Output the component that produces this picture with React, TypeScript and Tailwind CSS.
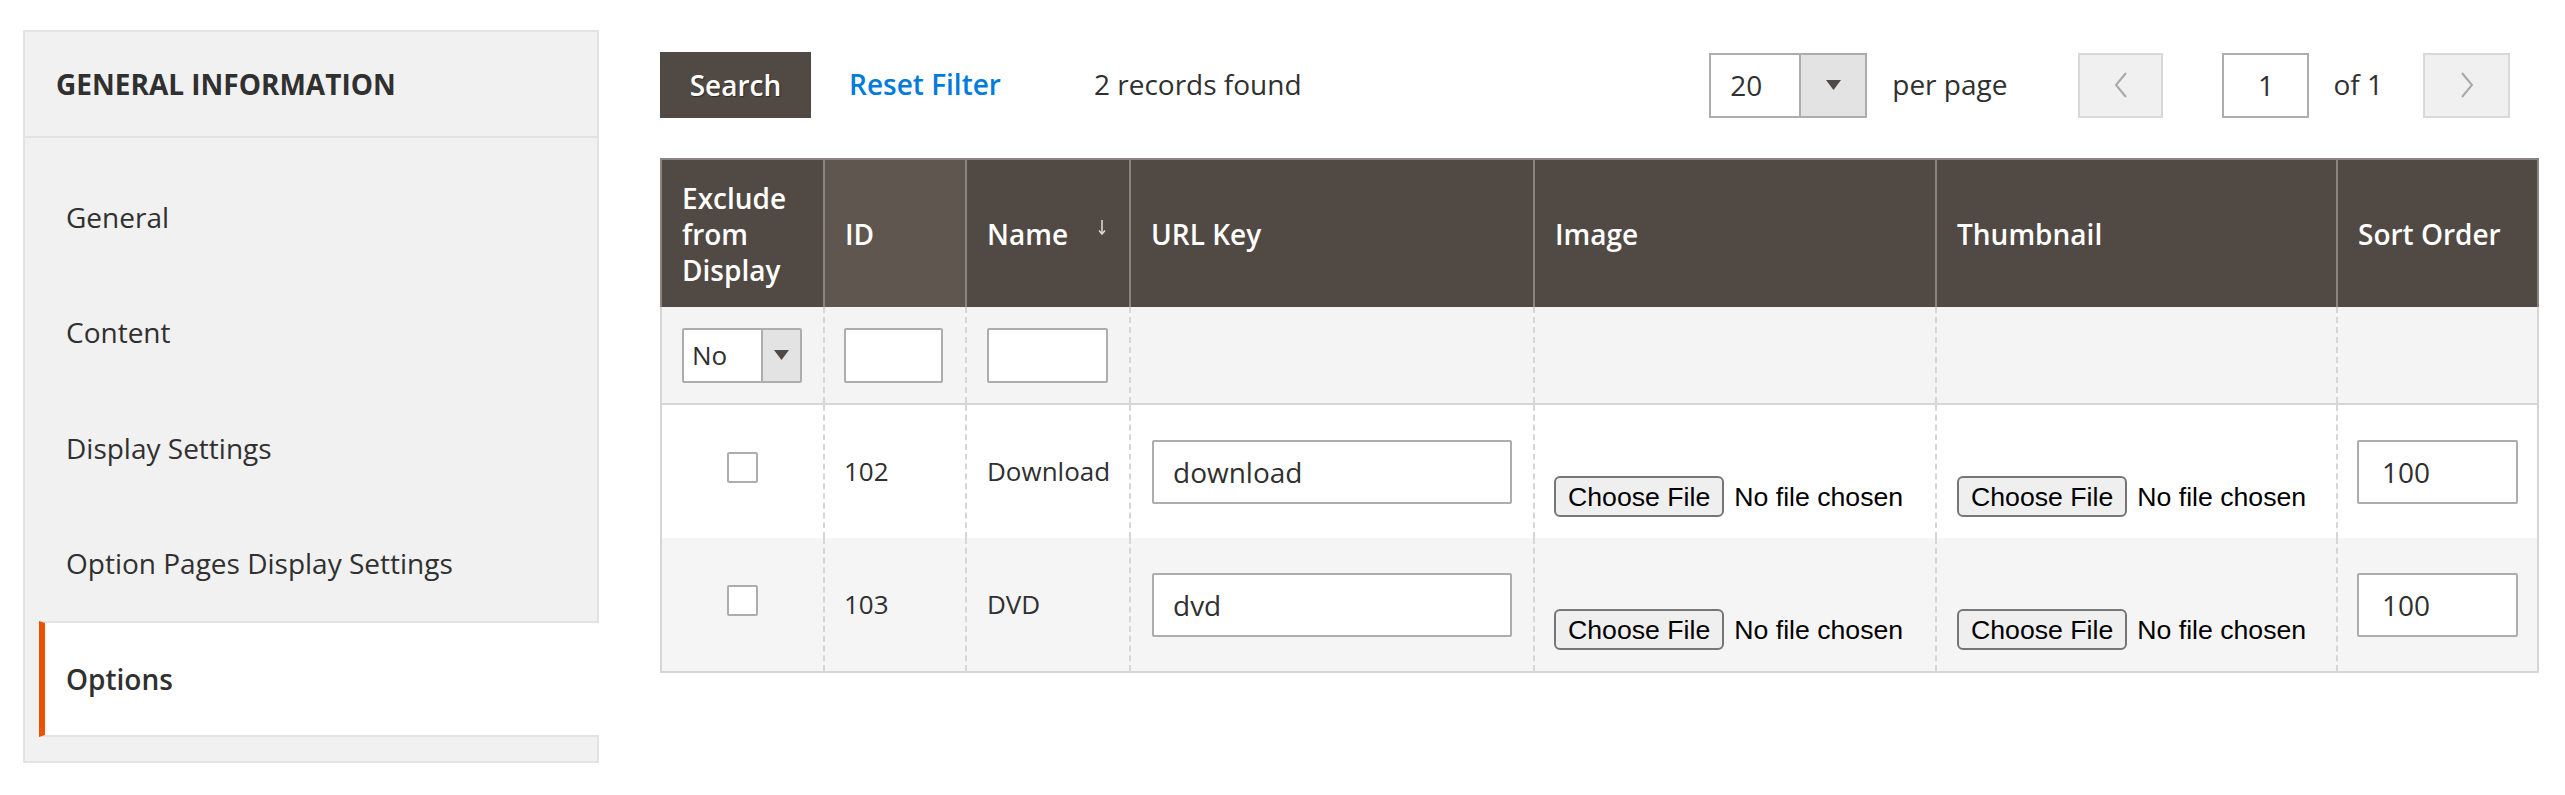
import React from "react"

const navItems = ["General", "Content", "Display Settings", "Option Pages Display Settings"]

const rows = [
  { id: "102", name: "Download", url: "download", sort: "100", bg: "bg-white", h: "h-[133px]" },
  { id: "103", name: "DVD", url: "dvd", sort: "100", bg: "bg-[#f5f5f5]", h: "h-[135px] border-b-2" },
]

function Triangle() {
  return (
    <svg width="15" height="10" viewBox="0 0 15 10">
      <polygon points="0,0 15,0 7.5,10" fill="#514943" />
    </svg>
  )
}

function Chevron({ dir }: { dir: "left" | "right" }) {
  return (
    <svg width="14" height="28" viewBox="0 0 14 28" fill="none">
      <polyline
        points={dir === "left" ? "12,2 2,14 12,26" : "2,2 12,14 2,26"}
        stroke="#a8a8a8"
        strokeWidth="2"
      />
    </svg>
  )
}

function SortArrow() {
  return (
    <svg width="10" height="15" viewBox="0 0 10 15" fill="none">
      <line x1="5" y1="0" x2="5" y2="14" stroke="#e0dcd8" strokeWidth="1.5" />
      <polyline points="2,10.5 5,14 8,10.5" stroke="#e0dcd8" strokeWidth="1.5" />
    </svg>
  )
}

function FileInput() {
  return (
    <div className="flex items-center font-['Liberation_Sans',Arial,sans-serif] text-[26.67px] text-black">
      <span className="h-[41px] px-[12px] border-2 border-[#767676] rounded-[6px] bg-[#efefef] flex items-center">
        Choose File
      </span>
      <span className="ml-[10px]">No file chosen</span>
    </div>
  )
}

export default function App() {
  return (
    <div className="w-[2565px] h-[795px] bg-white flex pt-[30px] pl-[23px] font-['Open_Sans',sans-serif] text-[#303030]">

      {/* SIDEBAR */}
      <div className="w-[576px] h-[733px] shrink-0 border-2 border-[#e3e3e3] bg-[#f1f1f1]">
        <div className="h-[106px] border-b-2 border-[#e3e3e3] pl-[31px] flex items-center">
          <span className="text-[28px] font-bold">GENERAL INFORMATION</span>
        </div>

        <div className="pt-[21px]">
          {navItems.map((item) => (
            <div key={item} className="h-[115.5px] ml-[14px] pl-[27px] flex items-center text-[28px]">
              {item}
            </div>
          ))}
          <div className="h-[116px] ml-[14px] mr-[-2px] pl-[21px] flex items-center bg-white border-l-[6px] border-l-[#eb5202] border-y-2 border-y-[#e3e3e3] text-[28px] font-semibold">
            Options
          </div>
        </div>
      </div>

      {/* CONTENT */}
      <div className="ml-[61px] w-[1879px] pt-[22px]">

        {/* TOOLBAR */}
        <div className="flex items-center h-[66px] text-[28px]">
          <button className="h-[66px] w-[151px] bg-[#514943] text-white font-semibold [text-shadow:1px_1px_1px_rgba(0,0,0,0.45)]">
            Search
          </button>
          <span className="ml-[38px] -mt-[2px] text-[#007bdb] font-semibold">Reset Filter</span>
          <span className="ml-[93px] -mt-[2px]">2 records found</span>

          <div className="ml-auto mr-[29px] flex items-center">
            <div className="w-[158px] h-[65px] border-2 border-[#adadad] flex bg-white">
              <div className="flex-1 pl-[19px] flex items-center">20</div>
              <div className="w-[66px] bg-[#e3e3e3] border-l-2 border-[#adadad] flex items-center justify-center">
                <Triangle />
              </div>
            </div>
            <span className="ml-[25px] -mt-[2px]">per page</span>

            <div className="ml-[71px] w-[85px] h-[65px] bg-[#f0f0f0] border-2 border-[#d9d9d9] flex items-center justify-center">
              <Chevron dir="left" />
            </div>
            <div className="ml-[59px] w-[87px] h-[65px] border-2 border-[#adadad] bg-white flex items-center justify-center">
              1
            </div>
            <span className="ml-[24px] -mt-[2px]">of 1</span>
            <div className="ml-[40px] w-[87px] h-[65px] bg-[#f0f0f0] border-2 border-[#d9d9d9] flex items-center justify-center">
              <Chevron dir="right" />
            </div>
          </div>
        </div>

        {/* GRID */}
        <div className="mt-[40px] w-[1879px]">

          {/* HEADER */}
          <div className="grid grid-cols-[161px_142px_164px_404px_402px_401px_201px] h-[149px] bg-[#514943] border-2 border-b-0 border-[#8a837f] text-white text-[28px] font-semibold leading-[36px]">
            <div className="px-[20px] flex items-center">Exclude from Display</div>
            <div className="px-[20px] flex items-center border-l-2 border-[#8a837f] bg-[#5f564f]">ID</div>
            <div className="pl-[20px] pr-[22px] flex items-center border-l-2 border-[#8a837f]">
              <span>Name</span>
              <span className="ml-auto -mt-[12px]">
                <SortArrow />
              </span>
            </div>
            <div className="px-[20px] flex items-center border-l-2 border-[#8a837f]">URL Key</div>
            <div className="px-[20px] flex items-center border-l-2 border-[#8a837f]">Image</div>
            <div className="px-[20px] flex items-center border-l-2 border-[#8a837f]">Thumbnail</div>
            <div className="px-[20px] flex items-center border-l-2 border-[#8a837f]">Sort Order</div>
          </div>

          {/* FILTERS */}
          <div className="grid grid-cols-[161px_142px_164px_404px_402px_401px_201px] h-[98px] bg-[#f4f4f4] border-x-2 border-b-2 border-[#d6d6d6]">
            <div className="pl-[20px] flex items-center">
              <div className="w-[120px] h-[55px] border-2 border-[#adadad] rounded-[2px] bg-white flex">
                <div className="flex-1 pl-[8px] flex items-center text-[26px]">No</div>
                <div className="w-[39px] bg-[#e3e3e3] border-l-2 border-[#adadad] flex items-center justify-center">
                  <Triangle />
                </div>
              </div>
            </div>
            <div className="pl-[19px] flex items-center border-l-2 border-dashed border-[#d6d6d6]">
              <div className="w-[99px] h-[55px] border-2 border-[#adadad] rounded-[2px] bg-white" />
            </div>
            <div className="pl-[20px] flex items-center border-l-2 border-dashed border-[#d6d6d6]">
              <div className="w-[121px] h-[55px] border-2 border-[#adadad] rounded-[2px] bg-white" />
            </div>
            <div className="border-l-2 border-dashed border-[#d6d6d6]" />
            <div className="border-l-2 border-dashed border-[#d6d6d6]" />
            <div className="border-l-2 border-dashed border-[#d6d6d6]" />
            <div className="border-l-2 border-dashed border-[#d6d6d6]" />
          </div>

          {/* ROWS */}
          {rows.map((r) => (
            <div
              key={r.id}
              className={`grid grid-cols-[161px_142px_164px_404px_402px_401px_201px] ${r.h} ${r.bg} border-x-2 border-[#d6d6d6] text-[26px]`}
            >
              <div className="flex items-center justify-center">
                <div className="w-[31px] h-[31px] -mt-[8px] border-2 border-[#adadad] rounded-[2px] bg-white" />
              </div>
              <div className="pl-[19px] flex items-center border-l-2 border-dashed border-[#d6d6d6]">{r.id}</div>
              <div className="pl-[20px] flex items-center border-l-2 border-dashed border-[#d6d6d6]">{r.name}</div>
              <div className="px-[21px] flex items-center border-l-2 border-dashed border-[#d6d6d6]">
                <div className="w-full h-[64px] border-2 border-[#adadad] rounded-[2px] bg-white pl-[19px] flex items-center text-[28px]">
                  {r.url}
                </div>
              </div>
              <div className="pl-[19px] pt-[71px] border-l-2 border-dashed border-[#d6d6d6]">
                <FileInput />
              </div>
              <div className="pl-[20px] pt-[71px] border-l-2 border-dashed border-[#d6d6d6]">
                <FileInput />
              </div>
              <div className="pl-[19px] pr-[19px] flex items-center border-l-2 border-dashed border-[#d6d6d6]">
                <div className="w-full h-[64px] border-2 border-[#adadad] rounded-[2px] bg-white pl-[23px] flex items-center text-[28px]">
                  {r.sort}
                </div>
              </div>
            </div>
          ))}
        </div>
      </div>
    </div>
  )
}
